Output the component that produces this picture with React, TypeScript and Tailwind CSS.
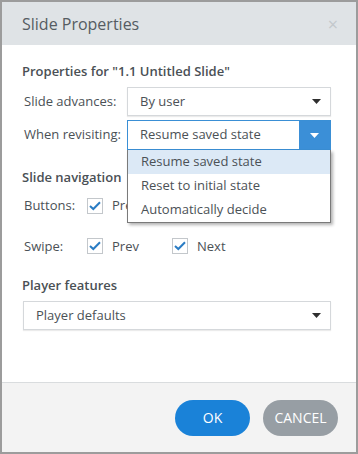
import React from "react";

const Caret = ({ color = "#2f2f2f" }: { color?: string }) => (
  <svg width="9" height="5" viewBox="0 0 9 5">
    <path d="M0 0 H9 L4.5 5 Z" fill={color} />
  </svg>
);

const Check = ({ label }: { label: string }) => (
  <div className="flex items-center gap-[9px]">
    <div className="w-[16px] h-[16px] border border-[#c3c7cb] bg-white flex items-center justify-center">
      <svg width="12" height="10" viewBox="0 0 12 10">
        <path d="M1 5 L4.3 8 L11 1.2" fill="none" stroke="#2a7cc4" strokeWidth="2" />
      </svg>
    </div>
    <span>{label}</span>
  </div>
);

export default function App() {
  return (
    <div
      className="w-[358px] h-[454px] border-2 border-[#9c9c9c] bg-white flex flex-col text-[#4b5156] text-[13px]"
      style={{ fontFamily: '"Open Sans", "Noto Sans", sans-serif' }}
    >
      <div className="h-[43px] bg-[#dfe3e6] flex items-center justify-between pl-[20px] pr-[18px]">
        <span className="text-[16px] text-[#555c62] mt-[1px]">Slide Properties</span>
        <span className="text-[18px] text-[#c3c8cc] leading-none">×</span>
      </div>
      <div className="flex-1 px-[20px] pt-[16px] relative">
        <div className="font-semibold text-[#4a5055] leading-[20px]">Properties for "1.1 Untitled Slide"</div>
        <div className="flex items-center mt-[6px]">
          <span className="w-[105px] pl-[2px]">Slide advances:</span>
          <div className="w-[204px] h-[29px] border border-[#d5d8db] flex items-center justify-between pl-[12px] pr-[9px] shadow-[0_1px_1px_rgba(0,0,0,0.08)]">
            <span>By user</span>
            <Caret />
          </div>
        </div>
        <div className="flex items-center mt-[4px] relative">
          <span className="w-[105px] pl-[2px]">When revisiting:</span>
          <div className="w-[204px] h-[30px] border border-[#3a8fd5] flex items-stretch">
            <div className="flex-1 flex items-center pl-[12px]">Resume saved state</div>
            <div className="w-[31px] bg-[#3b8fd7] flex items-center justify-center">
              <Caret color="#ffffff" />
            </div>
          </div>
          <div className="absolute left-[105px] top-[30px] w-[204px] bg-white border border-[#7a7a7a] border-t-0 shadow-[2px_2px_3px_rgba(0,0,0,0.3)] z-10">
            <div className="h-[24px] bg-[#dce9f6] pl-[13px] flex items-center">Resume saved state</div>
            <div className="h-[24px] pl-[13px] flex items-center">Reset to initial state</div>
            <div className="h-[24px] pl-[13px] flex items-center">Automatically decide</div>
          </div>
        </div>
        <div className="font-semibold text-[#4a5055] mt-[17px] leading-[20px]">Slide navigation</div>
        <div className="flex items-center mt-[9px] pl-[2px]">
          <span className="w-[63px]">Buttons:</span>
          <div className="w-[85px]"><Check label="Prev" /></div>
        </div>
        <div className="flex items-center mt-[21px] pl-[2px]">
          <span className="w-[63px]">Swipe:</span>
          <div className="w-[85px]"><Check label="Prev" /></div>
          <Check label="Next" />
        </div>
        <div className="font-semibold text-[#4a5055] mt-[19px] leading-[20px]">Player features</div>
        <div className="mt-[6px] ml-[1px] w-[308px] h-[29px] border border-[#d5d8db] flex items-center justify-between pl-[12px] pr-[9px] shadow-[0_1px_1px_rgba(0,0,0,0.08)]">
          <span>Player defaults</span>
          <Caret />
        </div>
      </div>
      <div className="h-[70px] bg-[#f3f3f3] border-t border-[#d9dcde] flex items-center justify-end gap-[13px] pr-[18px]">
        <button className="w-[75px] h-[36px] rounded-full bg-[#1a82d8] text-white text-[14px]">OK</button>
        <button className="w-[75px] h-[36px] rounded-full bg-[#979ea4] text-white text-[14px]">CANCEL</button>
      </div>
    </div>
  );
}
